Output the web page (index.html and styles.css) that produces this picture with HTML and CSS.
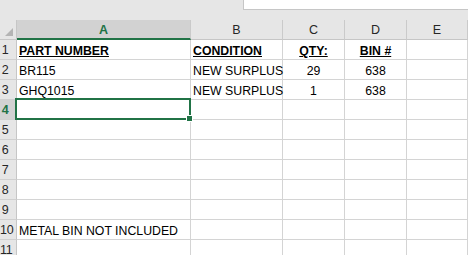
FILE: index.html
```html
<!DOCTYPE html>
<html lang="en">
<head>
  <meta charset="UTF-8" />
  <title>Sheet1</title>
  <link rel="stylesheet" href="styles.css">
</head>
<body>
  <div class="sheet">
    <div class="topbar">
      <div class="formula"></div>
    </div>
    <div class="grid">
      <div class="corner"><span class="tri"></span></div>
      <div class="colhead selected">A</div>
      <div class="colhead">B</div>
      <div class="colhead">C</div>
      <div class="colhead">D</div>
      <div class="colhead">E</div>

      <div class="rowhead">1</div>
      <div class="cell title">PART NUMBER</div>
      <div class="cell title">CONDITION</div>
      <div class="cell title center">QTY:</div>
      <div class="cell title center">BIN #</div>
      <div class="cell"></div>

      <div class="rowhead">2</div>
      <div class="cell">BR115</div>
      <div class="cell">NEW SURPLUS</div>
      <div class="cell center">29</div>
      <div class="cell center">638</div>
      <div class="cell"></div>

      <div class="rowhead">3</div>
      <div class="cell">GHQ1015</div>
      <div class="cell">NEW SURPLUS</div>
      <div class="cell center">1</div>
      <div class="cell center">638</div>
      <div class="cell"></div>

      <div class="rowhead selected">4</div>
      <div class="cell active"><span class="handle"></span></div>
      <div class="cell"></div>
      <div class="cell"></div>
      <div class="cell"></div>
      <div class="cell"></div>

      <div class="rowhead">5</div>
      <div class="cell"></div><div class="cell"></div><div class="cell"></div><div class="cell"></div><div class="cell"></div>
      <div class="rowhead">6</div>
      <div class="cell"></div><div class="cell"></div><div class="cell"></div><div class="cell"></div><div class="cell"></div>
      <div class="rowhead">7</div>
      <div class="cell"></div><div class="cell"></div><div class="cell"></div><div class="cell"></div><div class="cell"></div>
      <div class="rowhead">8</div>
      <div class="cell"></div><div class="cell"></div><div class="cell"></div><div class="cell"></div><div class="cell"></div>
      <div class="rowhead">9</div>
      <div class="cell"></div><div class="cell"></div><div class="cell"></div><div class="cell"></div><div class="cell"></div>

      <div class="rowhead">10</div>
      <div class="cell wide">METAL BIN NOT INCLUDED</div>
      <div class="cell"></div>
      <div class="cell"></div>
      <div class="cell"></div>
      <div class="cell"></div>

      <div class="rowhead">11</div>
      <div class="cell"></div><div class="cell"></div><div class="cell"></div><div class="cell"></div><div class="cell"></div>
    </div>
  </div>
</body>
</html>
```

FILE: styles.css
```css
html, body {
  margin: 0;
  padding: 0;
  overflow: hidden;
  background: #fff;
}
.sheet {
  width: 468px;
  height: 255px;
  font-family: "Liberation Sans", Arial, sans-serif;
  overflow: hidden;
}
.topbar {
  height: 20px;
  background: #e6e6e6;
  display: flex;
  justify-content: flex-end;
}
.formula {
  width: 224px;
  height: 9px;
  background: #fff;
  border-left: 1px solid #c6c6c6;
  border-bottom: 1px solid #c6c6c6;
}
.grid {
  display: grid;
  grid-template-columns: 17px 174px 92px 62px 62px 1fr;
  grid-auto-rows: 20px;
}
.grid > div {
  box-sizing: border-box;
  border-right: 1px solid #d4d4d4;
  border-bottom: 1px solid #d4d4d4;
}
.corner {
  background: #e6e6e6;
  position: relative;
  border-right-color: #c6c6c6 !important;
  border-bottom-color: #c6c6c6 !important;
}
.tri {
  position: absolute;
  right: 3px;
  bottom: 3px;
  width: 0;
  height: 0;
  border-left: 8px solid transparent;
  border-bottom: 8px solid #b4b4b4;
}
.colhead {
  background: #e6e6e6;
  border-right-color: #cacaca !important;
  border-bottom-color: #c6c6c6 !important;
  text-align: center;
  font-size: 12.5px;
  line-height: 20px;
  color: #262626;
}
.colhead.selected {
  background: #d2d2d2;
  color: #217346;
  font-weight: bold;
  border-bottom: 2px solid #217346 !important;
}
.rowhead {
  background: #e6e6e6;
  border-right-color: #c6c6c6 !important;
  border-bottom-color: #d0d0d0 !important;
  font-size: 12.5px;
  line-height: 20px;
  color: #262626;
  text-align: center;
  padding-right: 6px;
  letter-spacing: -0.3px;
}
.rowhead.selected {
  background: #d2d2d2;
  color: #217346;
  font-weight: bold;
}
.cell {
  font-size: 12.3px;
  line-height: 20px;
  padding: 1px 0 0 2px;
  color: #000;
  white-space: nowrap;
  position: relative;
}
.cell.center {
  text-align: center;
  padding-left: 0;
}
.cell.title {
  font-weight: bold;
  text-decoration: underline;
}
.cell.wide {
  overflow: visible;
  z-index: 1;
}
.cell.active::after {
  content: "";
  position: absolute;
  top: -2px;
  left: -2px;
  right: -1px;
  bottom: -1px;
  border: 2px solid #217346;
  pointer-events: none;
}
.handle {
  position: absolute;
  right: -3px;
  bottom: -3px;
  width: 5px;
  height: 5px;
  background: #217346;
  border: 1px solid #fff;
  z-index: 2;
}
```
